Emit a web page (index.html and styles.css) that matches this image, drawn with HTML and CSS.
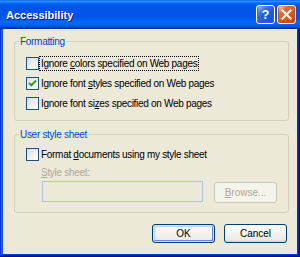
FILE: index.html
```html
<!DOCTYPE html>
<html>
<head>
<meta charset="utf-8">
<link rel="stylesheet" href="styles.css">
</head>
<body>
<div class="window">
  <div class="titlebar">
    <span class="title">Accessibility</span>
    <div class="controls">
      <span class="tbtn help">?</span>
      <span class="tbtn close"><svg width="11" height="11" viewBox="0 0 11 11"><path d="M1.5 1.5 L9.5 9.5 M9.5 1.5 L1.5 9.5" stroke="#fff" stroke-width="2" stroke-linecap="square"/></svg></span>
    </div>
  </div>
  <div class="client">
    <fieldset class="group group-format">
      <legend>Formatting</legend>
      <div class="row"><span class="box"></span><span class="text focus">Ignore <u>c</u>olors specified on Web pages</span></div>
      <div class="row"><span class="box checked"><svg width="11" height="11" viewBox="0 0 11 11"><path d="M2 5 L4.3 7.3 L9 2.6" stroke="#21a121" stroke-width="2" fill="none"/></svg></span><span class="text">Ignore font <u>s</u>tyles specified on Web pages</span></div>
      <div class="row"><span class="box"></span><span class="text">Ignore font si<u>z</u>es specified on Web pages</span></div>
    </fieldset>
    <fieldset class="group group-user">
      <legend>User style sheet</legend>
      <div class="row"><span class="box"></span><span class="text">Format <u>d</u>ocuments using my style sheet</span></div>
      <div class="field-label"><u>S</u>tyle sheet:</div>
      <div class="field-row"><span class="textbox"></span><span class="btn disabled browse"><u>B</u>rowse...</span></div>
    </fieldset>
    <div class="actions">
      <span class="btn default">OK</span>
      <span class="btn">Cancel</span>
    </div>
  </div>
</div>
</body>
</html>
```
FILE: styles.css
```css
html, body {
  margin: 0;
  padding: 0;
  background: #ece9d8;
}
body {
  font-family: "Liberation Sans", Arial, sans-serif;
  font-size: 10px;
  letter-spacing: -0.3px;
}
.window {
  width: 300px;
  height: 257px;
  box-sizing: border-box;
  display: flex;
  flex-direction: column;
  background: #0831d9;
  box-shadow: inset -1px -1px #00138c, inset 1px 1px #0831d9, inset -2px -2px #001ea0, inset 2px 2px #166aee, inset -3px -3px #003bda, inset 3px 3px #0855dd;
}
.titlebar {
  height: 29px;
  flex: none;
  display: flex;
  align-items: center;
  justify-content: space-between;
  padding: 0 4px 0 6px;
  background: linear-gradient(to bottom, #0058ee 0%, #3593ff 4%, #288eff 6%, #127dff 8%, #036ffc 10%, #0262ee 14%, #0057e5 20%, #0054e3 24%, #0055eb 56%, #005bf5 66%, #026afe 76%, #0062ef 86%, #0052d6 92%, #0040ab 94%, #003092 100%);
}
.title {
  color: #fff;
  font-weight: bold;
  font-size: 11px;
  letter-spacing: 0;
  text-shadow: 1px 1px #0f1089;
}
.controls {
  display: flex;
  gap: 2px;
}
.tbtn {
  width: 17px;
  height: 17px;
  border: 1px solid #fff;
  border-radius: 3px;
  display: flex;
  align-items: center;
  justify-content: center;
  color: #fff;
  font-weight: bold;
  font-size: 13px;
  letter-spacing: 0;
}
.help {
  background: radial-gradient(circle at 90% 90%, #0054e9 0%, #2263d5 55%, #4479e4 70%, #a3bbec 90%, #fff 100%);
  box-shadow: inset 0 -1px 2px 1px #4646ff;
}
.close {
  background: radial-gradient(circle at 90% 90%, #cc4600 0%, #dc6527 55%, #cd7546 70%, #ffccb2 90%, #fff 100%);
  box-shadow: inset 0 -1px 2px 1px #da4600;
}
.close svg { display: block; }
.client {
  flex: 1;
  margin: 0 3px 3px 3px;
  background: #ece9d8;
  display: flex;
  flex-direction: column;
}
.group {
  margin: 0 8px 0 11px;
  border: 1px solid #d0d0bf;
  border-radius: 3px;
  padding: 8px 9px 9px 4px;
  min-width: 0;
}
.group-format { margin-top: 6px; }
.group-user { margin-top: 7px; padding-top: 6px; padding-bottom: 9px; }
legend {
  color: #0046d5;
  padding: 0 1px;
  line-height: 13px;
  height: 13px;
}
.row {
  display: flex;
  align-items: center;
  height: 15px;
  padding-left: 7px;
}
.group-format .row + .row { margin-top: 5px; }
.box {
  width: 11px;
  height: 11px;
  border: 1px solid #1c5180;
  background: linear-gradient(135deg, #dcdcd7 0%, #fbfbf9 80%, #fff 100%);
  flex: none;
  display: flex;
  align-items: center;
  justify-content: center;
}
.box svg { display: block; }
.text {
  margin-left: 1px;
  padding: 0 1px;
  line-height: 13px;
  color: #000;
  white-space: nowrap;
}
.focus {
  outline: 1px dotted #000;
  outline-offset: 0;
}
.field-label {
  margin: 4px 0 0 22px;
  line-height: 13px;
  color: #aca899;
}
.field-row {
  display: flex;
  align-items: flex-start;
  margin: 2px 0 0 23px;
}
.textbox {
  width: 159px;
  height: 19px;
  border: 1px solid #b1c1d6;
  background: #ece9d8;
}
.btn {
  box-sizing: border-box;
  width: 63px;
  height: 19px;
  border: 1px solid #003c74;
  border-radius: 3px;
  background: linear-gradient(to bottom, #fff 0%, #f4f4f0 40%, #ecebe6 85%, #d6d0c5 100%);
  display: flex;
  align-items: center;
  justify-content: center;
  color: #000;
  letter-spacing: 0;
}
.btn.disabled {
  border-color: #c9c7ba;
  background: #f5f4ea;
  color: #aca899;
}
.browse {
  margin: 1px 0 0 11px;
  height: 21px;
}
.btn.default {
  box-shadow: inset 0 0 0 1px #cee7ff, inset -1px -1px 0 1px #6982ee, inset 1px 1px 0 1px #bad6fd;
}
.actions {
  display: flex;
  justify-content: flex-end;
  gap: 9px;
  margin: 11px 10px 0 0;
}
```
